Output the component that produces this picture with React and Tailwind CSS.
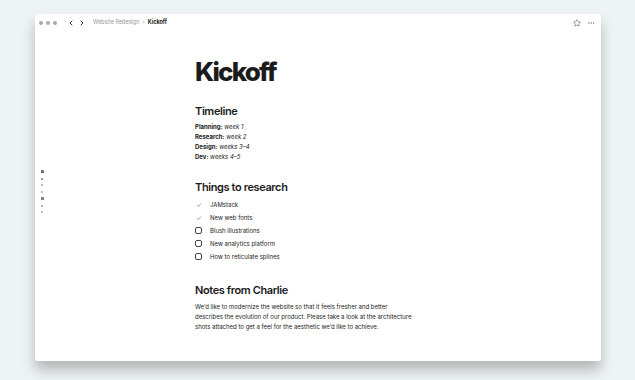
import React from "react";
import { ChevronLeft, ChevronRight, Star, MoreHorizontal } from "lucide-react";

const font = { fontFamily: "Inter, 'Liberation Sans', sans-serif" };

function Check() {
  return (
    <svg width="6" height="6" viewBox="0 0 6 6" className="ml-[1px]">
      <path d="M1 3.2 L2.4 4.4 L5 1.6" fill="none" stroke="#8a8a8a" strokeWidth="0.8" />
    </svg>
  );
}

function Box() {
  return <div className="w-[7px] h-[7px] rounded-[2px] border border-[#444]" />;
}

export default function App() {
  const timeline = [
    ["Planning:", "week 1"],
    ["Research:", "week 2"],
    ["Design:", "weeks 3–4"],
    ["Dev:", "weeks 4–5"],
  ];
  const todos = [
    [true, "JAMstack"],
    [true, "New web fonts"],
    [false, "Blush illustrations"],
    [false, "New analytics platform"],
    [false, "How to reticulate splines"],
  ];
  const sideDots = [
    "w-[3px] h-[3px] bg-[#707070]",
    "w-[2px] h-[2px] bg-[#909090]",
    "w-[2px] h-[2px] bg-[#bdbdbd]",
    "w-[2px] h-[2px] bg-[#bdbdbd]",
    "w-[3px] h-[3px] bg-[#808080]",
    "w-[2px] h-[2px] bg-[#b0b0b0]",
    "w-[2px] h-[2px] bg-[#bdbdbd]",
  ];
  return (
    <div className="w-[635px] h-[380px] bg-[#eef3f3] pt-[14px] pl-[35px] overflow-hidden" style={font}>
      <div className="w-[566px] h-[347px] bg-white rounded-[3px] shadow-[0_9px_14px_rgba(0,0,0,0.25)] flex flex-col overflow-hidden">
        {/* top bar */}
        <div className="h-[18px] flex items-center pl-[4px] pr-[6px]">
          <div className="flex gap-[3px]">
            <div className="w-[4px] h-[4px] rounded-full bg-[#a9a9a9]" />
            <div className="w-[4px] h-[4px] rounded-full bg-[#a9a9a9]" />
            <div className="w-[4px] h-[4px] rounded-full bg-[#a9a9a9]" />
          </div>
          <div className="flex items-center gap-[3px] ml-[10px]">
            <ChevronLeft size={8} strokeWidth={3} color="#333" />
            <ChevronRight size={8} strokeWidth={3} color="#333" />
          </div>
          <div className="flex items-center ml-[7px] text-[5.5px] leading-none">
            <span className="text-[#9a9a9a]">Website Redesign</span>
            <span className="text-[#9a9a9a] mx-[3px]">›</span>
            <span className="text-[#222] font-bold">Kickoff</span>
          </div>
          <div className="ml-auto flex items-center gap-[6px]">
            <Star size={8} strokeWidth={1.6} color="#444" />
            <MoreHorizontal size={8} strokeWidth={2} color="#888" />
          </div>
        </div>

        <div className="flex flex-1">
          {/* side minimap */}
          <div className="w-[160px] pl-[6px] pt-[138px] flex flex-col gap-[4.5px] items-start">
            {sideDots.map((c, i) => (
              <div key={i} className={"rounded-[0.5px] " + c} />
            ))}
          </div>

          {/* content */}
          <div className="flex flex-col text-[#1b1b1b]">
            <h1 className="mt-[25px] text-[26px] leading-[30px] font-extrabold tracking-[-0.07em]">Kickoff</h1>

            <h2 className="mt-[17px] text-[11px] leading-[14px] font-semibold tracking-[-0.035em]">Timeline</h2>
            <div className="mt-[4px] flex flex-col text-[6px] leading-[10px]">
              {timeline.map(([a, b]) => (
                <div key={a}>
                  <span className="font-bold">{a}</span> <span className="italic">{b}</span>
                </div>
              ))}
            </div>

            <h2 className="mt-[18px] text-[11px] leading-[14px] font-semibold tracking-[-0.035em]">Things to research</h2>
            <div className="mt-[4px] flex flex-col text-[6px]">
              {todos.map(([done, t]) => (
                <div key={t} className="h-[13px] flex items-center">
                  <div className="w-[15px] flex items-center">{done ? <Check /> : <Box />}</div>
                  <span>{t}</span>
                </div>
              ))}
            </div>

            <h2 className="mt-[20px] text-[11px] leading-[14px] font-semibold tracking-[-0.035em]">Notes from Charlie</h2>
            <p className="mt-[5px] text-[6px] leading-[10px] w-[220px]">
              We’d like to modernize the website so that it feels fresher and better describes the evolution of our
              product. Please take a look at the architecture shots attached to get a feel for the aesthetic we’d like
              to achieve.
            </p>
          </div>
        </div>
      </div>
    </div>
  );
}
